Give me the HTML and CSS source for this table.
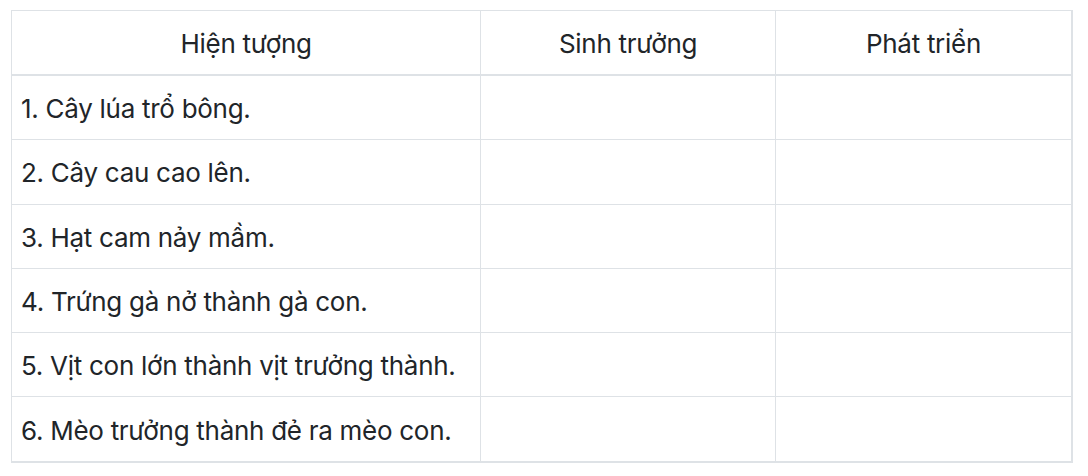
FILE: index.html
```html
<!DOCTYPE html>
<html lang="vi">
<head>
<meta charset="utf-8">
<link rel="stylesheet" href="styles.css">
</head>
<body>
<div class="wrap">
<table class="grid">
  <colgroup>
    <col class="c1"><col class="c2"><col class="c3">
  </colgroup>
  <thead>
    <tr><th>Hiện tượng</th><th>Sinh trưởng</th><th>Phát triển</th></tr>
  </thead>
  <tbody>
    <tr><td>1. Cây lúa trổ bông.</td><td></td><td></td></tr>
    <tr><td>2. Cây cau cao lên.</td><td></td><td></td></tr>
    <tr><td>3. Hạt cam nảy mầm.</td><td></td><td></td></tr>
    <tr><td>4. Trứng gà nở thành gà con.</td><td></td><td></td></tr>
    <tr><td>5. Vịt con lớn thành vịt trưởng thành.</td><td></td><td></td></tr>
    <tr><td>6. Mèo trưởng thành đẻ ra mèo con.</td><td></td><td></td></tr>
  </tbody>
</table>
</div>
</body>
</html>
```

FILE: styles.css
```css
html, body {
  margin: 0;
  padding: 0;
  background: #fff;
}
.wrap {
  padding: 10px 0 0 11px;
}
.grid {
  border-collapse: collapse;
  width: 1062px;
  font-family: Inter, "Liberation Sans", sans-serif;
  font-size: 26px;
  letter-spacing: -0.28px;
  color: #212529;
  border-right: 2px solid #dee2e6;
  border-bottom: 2px solid #dee2e6;
}
.c1 { width: 470px; }
.c2 { width: 295px; }
.c3 { width: 297px; }
.grid th, .grid td {
  border: 1px solid #dee2e6;
  padding: 3px 9px 0;
  line-height: 32px;
}
.grid th {
  height: 60px;
  font-weight: 400;
  text-align: center;
  border-bottom-width: 2px;
}
.grid td {
  height: 60.3px;
  text-align: left;
}
```
